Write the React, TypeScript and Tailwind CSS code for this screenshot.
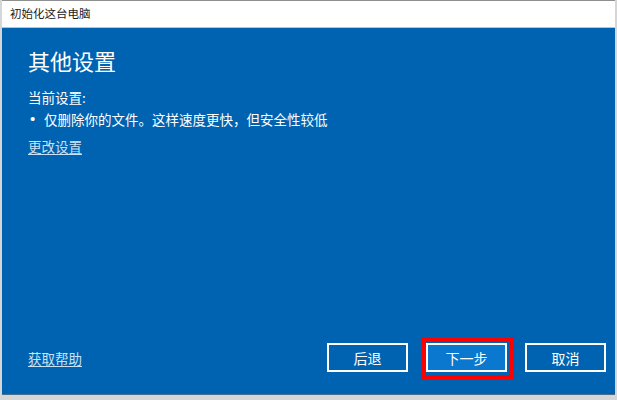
import React from "react";

const font = { fontFamily: '"Noto Sans CJK SC", "Noto Sans", sans-serif' };

function DialogButton({ label, primary }: { label: string; primary?: boolean }) {
  return (
    <button
      className={`h-[29px] w-[81px] border-2 border-white text-[14px] leading-none text-white ${
        primary ? "bg-[#0b78d0]" : "bg-transparent"
      }`}
    >
      {label}
    </button>
  );
}

export default function App() {
  return (
    <div
      className="flex h-[400px] w-[617px] flex-col bg-[#d6d6d6] pb-[5px] pl-[2px] pr-[2px]"
      style={font}
    >
      {/* window */}
      <div className="flex flex-1 flex-col border-t border-[#8f8f8f]">
        {/* title bar */}
        <div className="flex h-[26px] items-center bg-white pl-[8px] text-[11.5px] text-[#1a1a1a]">
          初始化这台电脑
        </div>
        <div className="h-px bg-[#b8c4cf]" />

        {/* body */}
        <div className="flex flex-1 flex-col border-b border-[#4a6d8c] bg-[#0063b1] pl-[26px] pr-[9px] text-white">
          <h1 className="pt-[17px] text-[22px] leading-[30px] font-normal">其他设置</h1>
          <p className="mt-[12px] text-[13.5px] leading-[20px]">当前设置:</p>
          <div className="mt-[2px] flex items-center text-[13.5px] leading-[20px]">
            <span className="w-[16px] pl-[2px] font-['Liberation_Sans'] text-[15px]">•</span>
            <span>仅删除你的文件。这样速度更快，但安全性较低</span>
          </div>
          <a className="mt-[7px] w-fit text-[13.5px] leading-[20px] text-[#c9e1f5] underline underline-offset-2">
            更改设置
          </a>

          <div className="flex-1" />

          {/* footer */}
          <div className="mb-[22px] flex items-center">
            <a className="text-[13.5px] leading-[20px] text-[#c9e1f5] underline underline-offset-2">
              获取帮助
            </a>
            <div className="flex-1" />
            <div className="flex gap-[18px]">
              <DialogButton label="后退" />
              <div className="relative">
                <DialogButton label="下一步" primary />
                <div className="pointer-events-none absolute -bottom-[7px] -left-[5px] -right-[7px] -top-[5px] border-[4px] border-[#ff0000]" />
              </div>
              <DialogButton label="取消" />
            </div>
          </div>
        </div>
      </div>
    </div>
  );
}
